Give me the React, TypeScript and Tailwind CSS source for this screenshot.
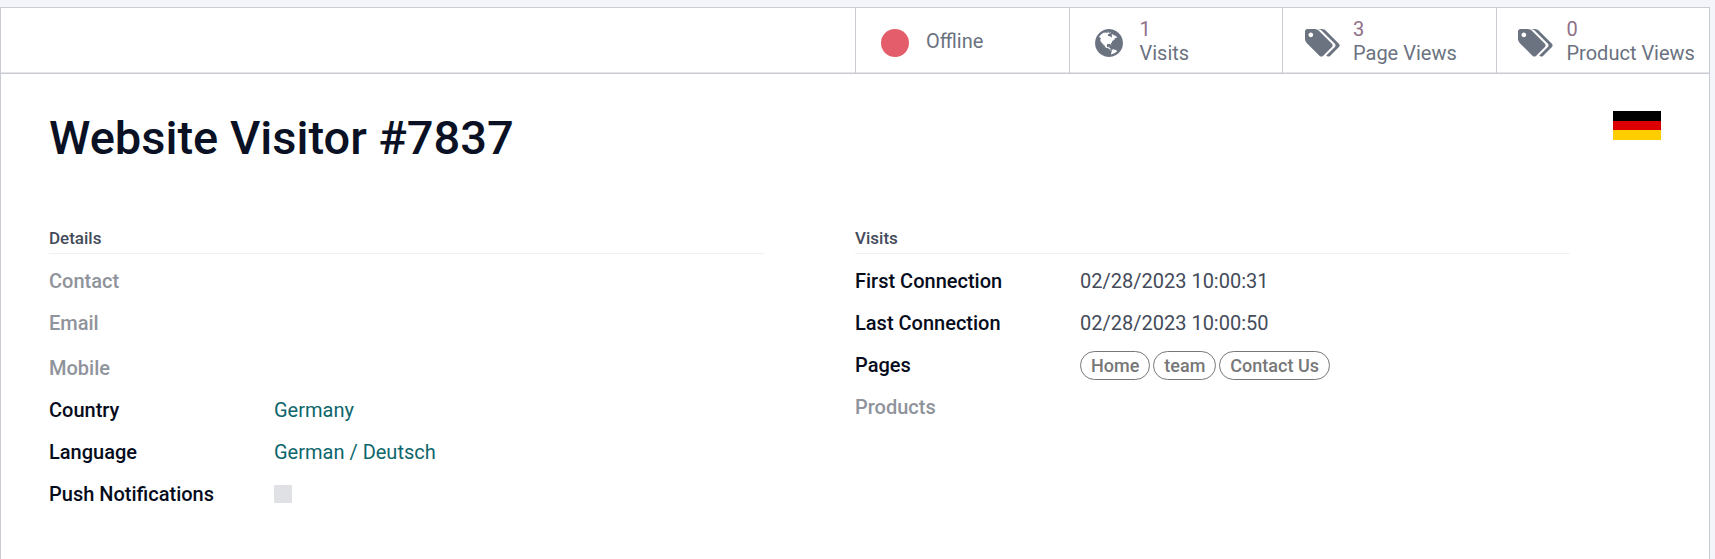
import type { ReactNode } from 'react';

function GlobeIcon() {
  return (
    <svg viewBox="128 128 1536 1536" className="size-7" fill="currentColor" aria-hidden="true">
      <path d="M896 128q209 0 385.5 103t279.5 279.5 103 385.5-103 385.5-279.5 279.5-385.5 103-385.5-103-279.5-279.5-103-385.5 103-385.5 279.5-279.5 385.5-103zm274 521q-2 1-9.5 9.5t-13.5 9.5q2 0 4.5-5t5-11 3.5-7q6-7 22-15 14-6 52-12 34-8 51 11-2-2 9.5-13t14.5-12q3-2 15-4.5t15-7.5l2-22q-12 1-17.5-7t-6.5-21q0 2-6 8 0-7-4.5-8t-11.5 1-9 1q-10-3-15-7.5t-8-16.5-4-15q-2-5-9.5-10.5t-9.5-10.5q-1-2-2.5-5.5t-3-6.5-4-5.5-5.5-2.5-7 5-7.5 10-4.5 5q-3-2-6-1.5t-4.5 1-4.5 3-5 3.5q-3 2-8.5 3t-8.5 2q15-5-1-11-10-4-16-3 9-4 7.5-12t-8.5-14h5q-1-4-8.5-8.5t-17.5-8.5-13-6q-8-5-34-9.5t-33-.5q-5 6-4.5 10.5t4 14 3.5 12.5q1 6-5.5 13t-6.5 12q0 7 14 15.5t10 21.5q-3 8-16 16t-16 12q-5 8-1.5 18.5t10.5 16.5q2 2 1.5 4t-3.5 4.5-5.5 4-6.5 3.5l-3 2q-11 5-20.5-6t-13.5-26q-7-25-16-30-23-8-29 1-5-13-41-26-25-9-58-4 6-1 0-15-7-15-19-12 3-6 4-17.5t1-13.5q3-13 12-23 1-1 7-8.5t9.5-13.5.5-6q35 4 50-11 5-5 11.5-17t10.5-17q9-6 14-5.5t14.5 5.5 14.5 5q14 1 15.5-11t-7.5-20q12 1 3-17-4-7-8-9-12-4-27 5-8 4 2 8-1-1-9.5 10.5t-16.5 17.5-16-5q-1-1-5.5-13.5t-9.5-13.5q-8 0-16 15 3-8-11-15t-24-8q19-12-8-27-7-4-20.5-5t-19.5 4q-5 7-5.5 11.5t5 8 10.5 5.5 11.5 4 8.5 3q14 10 8 14-2 1-8.5 3.5t-11.5 4.5-6 4q-3 4 0 14t-2 14q-5-5-9-17.5t-7-16.5q7 9-25 6l-10-1q-4 0-16 2t-20.5 1-13.5-8q-4-8 0-20 1-4 4-2-4-3-11-9.5t-10-8.5q-46 15-94 41 6 1 12-1 5-2 13-6.5t10-5.5q34-14 42-7l5-5q14 16 20 25-7-4-30-1-20 6-22 12 7 12 5 18-4-3-11.5-10t-14.5-11-15-5q-16 0-22 1-146 80-235 222 7 7 12 8 4 1 5 9t2.5 11 11.5-3q9 8 3 19 1-1 44 27 19 17 21 21 3 11-10 18-1-2-9-9t-9-4q-3 5 .5 18.5t10.5 12.5q-7 0-9.5 16t-2.5 35.5-1 23.5l2 1q-3 12 5.5 34.5t21.5 19.5q-13 3 20 43 6 8 8 9 3 2 12 7.5t15 10 10 10.5q4 5 10 22.5t14 23.5q-2 6 9.5 20t10.5 23q-1 0-2.5 1t-2.5 1q3 7 15.5 14t15.5 13q1 3 2 10t3 11 8 2q2-20-24-62-15-25-17-29-3-5-5.5-15.5t-4.5-14.5q2 0 6 1.5t8.5 3.5 7.5 4 2 3q-3 7 2 17.5t12 18.5 17 19 12 13q6 6 14 19.5t0 13.5q9 0 20 10t17 20q5 8 8 26t5 24q2 7 8.5 13.5t12.5 9.5l16 8 13 7q5 2 18.5 10.5t21.5 11.5q10 4 16 4t14.5-2.5 13.5-3.5q15-2 29 15t21 21q36 19 55 11-2 1 .5 7.5t8 15.5 9 14.5 5.5 8.5q5 6 18 15t18 15q6-4 7-9-3 8 7 20t18 10q14-3 14-32-31 15-49-18 0-1-2.5-5.5t-4-8.5-2.5-8.5 0-7.5 5-3q9 0 10-3.5t-2-12.5-4-13q-1-8-11-20t-12-15q-5 9-16 8t-16-9q0 1-1.5 5.5t-1.5 6.5q-13 0-15-1 1-3 2.5-17.5t3.5-22.5q1-4 5.5-12t7.5-14.5 4-12.5-4.5-9.5-17.5-2.5q-19 1-26 20-1 3-3 10.5t-5 11.5-9 7q-7 3-24 2t-24-5q-13-8-22.5-29t-9.5-37q0-10 2.5-26.5t3-25-5.5-24.5q3-2 9-9.5t10-10.5q2-1 4.5-1.5t4.5 0 4-1.5 3-6q-1-1-4-3-3-3-4-3 7 3 28.5-1.5t27.5 1.5q15 11 22-2 0-1-2.5-9.5t-.5-13.5q5 27 29 9 3 3 15.5 5t17.5 5q3 2 7 5.5t5.5 4.5 5-.5 8.5-6.5q10 14 12 24 11 40 19 44 7 3 11 2t4.5-9.5 0-14-1.5-12.5l-1-8v-18l-1-8q-15-3-18.5-12t1.5-18.5 15-18.5q1-1 8-3.5t15.5-6.5 12.5-8q21-19 15-35 7 0 11-9-1 0-5-3t-7.5-5-4.5-2q9-5 2-16 5-3 7.5-11t7.5-10q9 12 21 2 7-8 1-16 5-7 20.5-10.5t18.5-9.5q7 2 8-2t1-12 3-12q4-5 15-9t13-5l17-11q3-4 0-4 18 2 31-11 10-11-6-20 3-6-3-9.5t-15-5.5q3-1 11.5-.5t10.5-1.5q15-10-7-16-17-5-43 12zm-163 877q206-36 351-189-3-3-12.5-4.5t-12.5-3.5q-18-7-24-8 1-7-2.5-13t-8-9-12.5-8-11-7q-2-2-7-6t-7-5.5-7.5-4.5-8.5-2-10 1l-3 1q-3 1-5.5 2.5t-5.5 3-4 3 0 2.5q-21-17-36-22-5-1-11-5.5t-10.5-7-10-1.5-11.5 7q-5 5-6 15t-2 13q-7-5 0-17.5t2-18.5q-3-6-10.5-4.5t-12 4.5-11.5 8.5-9 6.5-8.5 5.5-8.5 7.5q-3 4-6 12t-5 11q-2-4-11.5-6.5t-9.5-5.5q2 10 4 35t5 38q7 31-12 48-27 25-29 40-4 22 12 26 0 7-8 20.5t-7 21.5q0 6 2 16z" />
    </svg>
  );
}

function TagsIcon() {
  return (
    <svg viewBox="-64 128 1920 1536" className="h-7 w-[35px]" fill="currentColor" aria-hidden="true">
      <path d="M384 448q0-53-37.5-90.5t-90.5-37.5-90.5 37.5-37.5 90.5 37.5 90.5 90.5 37.5 90.5-37.5 37.5-90.5zm1067 576q0 53-37 90l-491 492q-39 37-91 37-53 0-90-37l-715-716q-38-37-64.5-101t-26.5-117v-416q0-52 38-90t90-38h416q53 0 117 26.5t102 64.5l715 714q37 39 37 91zm384 0q0 53-37 90l-491 492q-39 37-91 37-36 0-59-14t-53-45l470-470q37-37 37-90 0-52-37-91l-715-714q-38-38-102-64.5t-117-26.5h224q53 0 117 26.5t102 64.5l715 714q37 39 37 91z" />
    </svg>
  );
}

function StatButton({ icon, value, label }: { icon: ReactNode; value?: string; label: string }) {
  return (
    <button
      type="button"
      className="flex w-1/8 items-center border-l border-[#c9ccd2] pl-2 text-left whitespace-nowrap text-[#6b7280]"
    >
      <span className="flex w-[62px] shrink-0 justify-center pt-1">{icon}</span>
      <span className="flex flex-col leading-6">
        {value && <span className="text-[#8f6f87]">{value}</span>}
        <span>{label}</span>
      </span>
    </button>
  );
}

function Group({ title, children }: { title: string; children: ReactNode }) {
  return (
    <section className="pr-[91px]">
      <h2 className="border-b border-[#f1f1f3] pb-[3px] text-[17px] leading-6 font-medium text-[#444b5a]">{title}</h2>
      <dl className="pt-[6px]">{children}</dl>
    </section>
  );
}

function Field({ label, tall, children }: { label: ReactNode; tall?: boolean; children?: ReactNode }) {
  return (
    <div className={`flex ${tall ? 'h-[45px] items-end' : 'h-[42px] items-start'}`}>
      <dt className={`flex h-[42px] w-[225px] shrink-0 items-center font-medium ${children ? 'text-[#060c1c]' : 'text-[#8f939b]'}`}>
        {label}
      </dt>
      <dd className="flex h-[42px] items-center text-[#444b5a]">{children}</dd>
    </div>
  );
}

function Tag({ children }: { children: ReactNode }) {
  return (
    <span className="rounded-full border border-[#777] px-[10px] text-[18px] leading-[27px] font-medium text-[#777]">
      {children}
    </span>
  );
}

export default function App() {
  return (
    <div className="flex min-h-screen bg-[#f4f5fa] pt-[7px] pr-[5px] font-[Roboto,sans-serif] text-[20px]">
      <main className="flex-1 border border-b-0 border-[#c9ccd2] bg-white">
        <div className="flex h-[66px] justify-end border-b border-[#c9ccd2] shadow-[inset_0_-1px_0_#e4e6ea]">
          <StatButton icon={<span className="size-7 rounded-full bg-[#e35d6a]" />} label="Offline" />
          <StatButton icon={<GlobeIcon />} value="1" label="Visits" />
          <StatButton icon={<TagsIcon />} value="3" label="Page Views" />
          <StatButton icon={<TagsIcon />} value="0" label="Product Views" />
        </div>

        <div className="px-12 pt-9">
          <div className="flex items-start justify-between">
            <h1 className="text-[47px] leading-[56px] font-medium text-[#0a1124]">Website Visitor #7837</h1>
            <svg viewBox="0 0 48 29" className="mt-px h-[29px] w-12" role="img" aria-label="Germany">
              <rect width="48" height="10" fill="#000" />
              <rect y="10" width="48" height="9" fill="#d00" />
              <rect y="19" width="48" height="10" fill="#ffce00" />
            </svg>
          </div>

          <div className="mt-[60px] grid grid-cols-2">
            <Group title="Details">
              <Field label="Contact" />
              <Field label="Email" />
              <Field label="Mobile" tall />
              <Field label="Country">
                <a href="#country" className="text-[#0c666b]">Germany</a>
              </Field>
              <Field label="Language">
                <a href="#language" className="text-[#0c666b]">German / Deutsch</a>
              </Field>
              <Field label={<label htmlFor="push">Push Notifications</label>}>
                <input id="push" type="checkbox" disabled className="size-[18px] appearance-none rounded-[1px] bg-[#e0e1e5]" />
              </Field>
            </Group>
            <Group title="Visits">
              <Field label="First Connection">02/28/2023 10:00:31</Field>
              <Field label="Last Connection">02/28/2023 10:00:50</Field>
              <Field label="Pages">
                <span className="flex gap-[3px]">
                  <Tag>Home</Tag>
                  <Tag>team</Tag>
                  <Tag>Contact Us</Tag>
                </span>
              </Field>
              <Field label="Products" />
            </Group>
          </div>
        </div>
      </main>
    </div>
  );
}
